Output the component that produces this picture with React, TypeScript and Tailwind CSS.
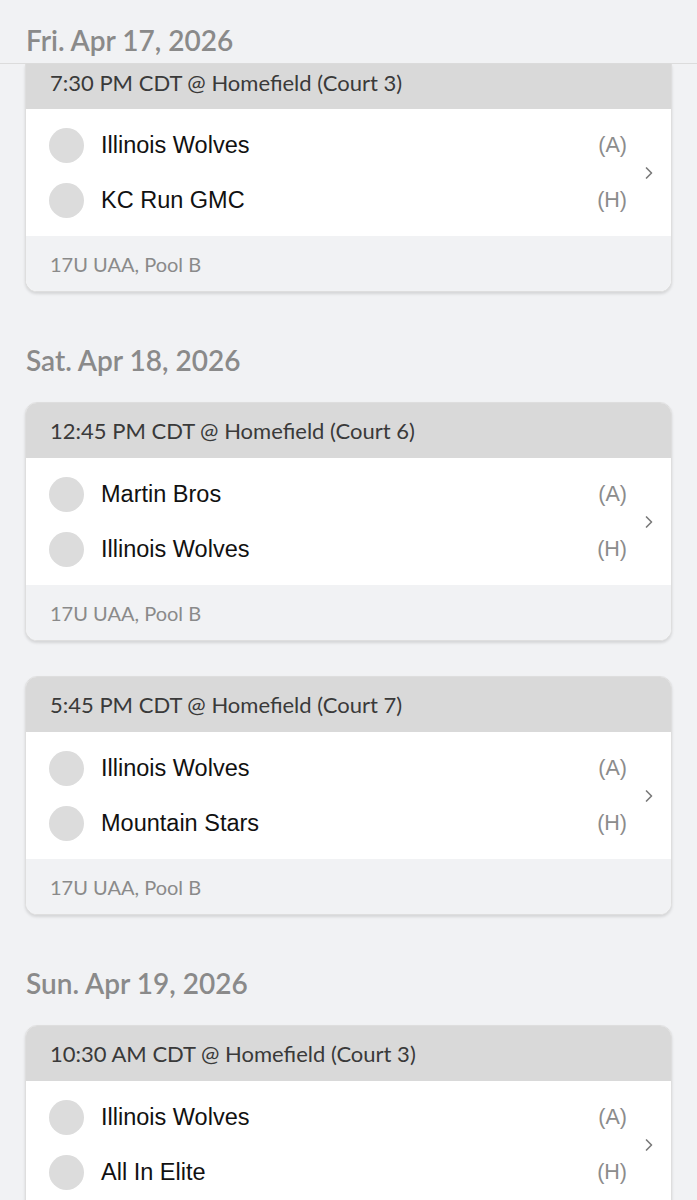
import { ChevronRight } from 'lucide-react'

type Game = {
  time: string
  away: string
  home: string
  pool: string
}

const days: { date: string; games: Game[] }[] = [
  {
    date: 'Sat. Apr 18, 2026',
    games: [
      { time: '12:45 PM CDT @ Homefield (Court 6)', away: 'Martin Bros', home: 'Illinois Wolves', pool: '17U UAA, Pool B' },
      { time: '5:45 PM CDT @ Homefield (Court 7)', away: 'Illinois Wolves', home: 'Mountain Stars', pool: '17U UAA, Pool B' },
    ],
  },
  {
    date: 'Sun. Apr 19, 2026',
    games: [
      { time: '10:30 AM CDT @ Homefield (Court 3)', away: 'Illinois Wolves', home: 'All In Elite', pool: '17U UAA, Pool B' },
    ],
  },
]

function TeamRow({ name, side }: { name: string; side: string }) {
  return (
    <div className="flex h-[55px] items-center">
      <div className="h-[35px] w-[35px] shrink-0 rounded-full bg-[#dcdcdc]" />
      <span className="ml-[17px] flex-1 text-[23.5px] text-[#111] font-['Liberation_Sans',sans-serif]">{name}</span>
      <span className="text-[21.5px] text-[#8c8c8c] font-['Liberation_Sans',sans-serif]">{side}</span>
    </div>
  )
}

function GameCard({ game, clipped }: { game: Game; clipped?: boolean }) {
  return (
    <div
      className={
        clipped
          ? 'mx-[25px] overflow-hidden rounded-b-[12px] border-x border-b border-[#dedede] bg-white shadow-[0_2px_3px_rgba(0,0,0,0.12)]'
          : 'mx-[25px] overflow-hidden rounded-[12px] border border-[#dedede] bg-white shadow-[0_2px_3px_rgba(0,0,0,0.12)]'
      }
    >
      <div
        className={
          clipped
            ? 'flex h-[45px] items-center bg-[#d9d9d9] pb-[8px] pl-[24px] text-[22px] text-[#3a3a3a]'
            : 'flex h-[55px] items-center bg-[#d9d9d9] pl-[24px] text-[22px] text-[#3a3a3a]'
        }
      >
        {game.time}
      </div>
      <div className="flex items-center pb-[8px] pl-[23px] pt-[9px]">
        <div className="flex-1">
          <TeamRow name={game.away} side="(A)" />
          <TeamRow name={game.home} side="(H)" />
        </div>
        <div className="flex w-[44px] justify-center">
          <ChevronRight className="h-[20px] w-[20px] text-[#7a7a7a]" strokeWidth={2} />
        </div>
      </div>
      <div className="flex h-[55px] items-center bg-[#f1f2f4] pl-[24px] text-[20px] text-[#8a8a8a]">
        {game.pool}
      </div>
    </div>
  )
}

function DateHeader({ date }: { date: string }) {
  return (
    <div className="flex h-[75px] items-center pb-[9px] pl-[26px] text-[28px] leading-[34px] font-semibold text-[#8a8a8a]">
      {date}
    </div>
  )
}

export default function App() {
  return (
    <div className="min-h-[1200px] bg-[#f1f2f4] font-['Lato',sans-serif]">
      <div className="flex h-[64px] items-end border-b border-[#dcdcdc] pb-[6px] pl-[26px] text-[28px] leading-[34px] font-semibold text-[#8a8a8a]">
        Fri. Apr 17, 2026
      </div>
      <GameCard
        clipped
        game={{ time: '7:30 PM CDT @ Homefield (Court 3)', away: 'Illinois Wolves', home: 'KC Run GMC', pool: '17U UAA, Pool B' }}
      />
      {days.map((day) => (
        <div key={day.date} className="pt-[35px]">
          <DateHeader date={day.date} />
          <div className="flex flex-col gap-[35px]">
            {day.games.map((g) => (
              <GameCard key={g.time} game={g} />
            ))}
          </div>
        </div>
      ))}
    </div>
  )
}
